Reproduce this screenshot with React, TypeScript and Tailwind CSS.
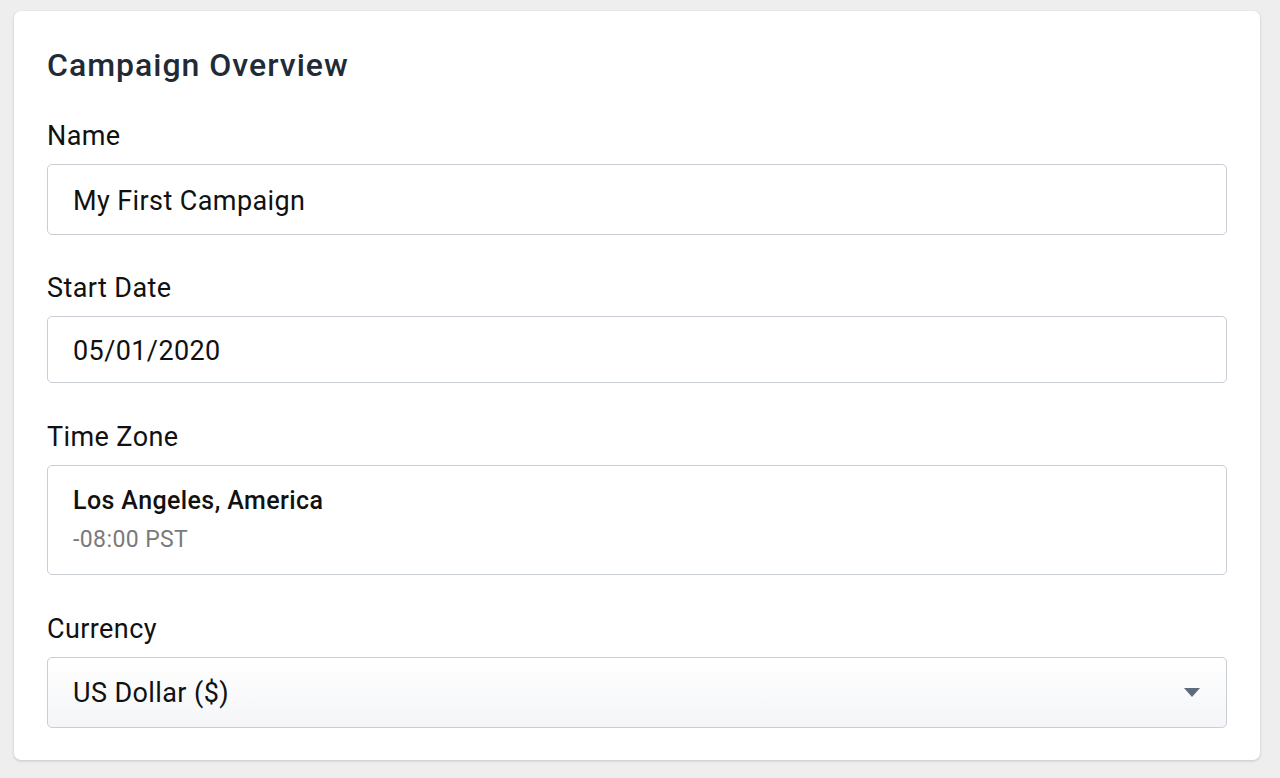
import { ReactNode } from "react";

// Campaign overview form card

const Label = ({ children }: { children: ReactNode }) => (
  <div className="text-[27px] leading-[28px] tracking-[0.4px] text-[#111111] mb-[14px]">{children}</div>
);

export default function App() {
  return (
    <div
      className="min-h-[778px] bg-[#eeeeee] pt-[11px] pl-[14px]"
      style={{ fontFamily: "Roboto, 'Liberation Sans', sans-serif" }}
    >
      <div className="w-[1246px] bg-white rounded-[7px] shadow-[0_1px_3px_rgba(0,0,0,0.18)] px-[33px] pt-[37px] pb-[32px]">
        <h2 className="text-[32px] leading-[34px] tracking-[1px] font-medium text-[#1f2b36]">Campaign Overview</h2>

        <div className="mt-[40px]">
          <Label>Name</Label>
          <div className="h-[71px] flex items-center border border-[#c9cdd4] rounded-[5px] px-[25px] pt-[4px] text-[27px] tracking-[0.4px] text-[#111111]">
            My First Campaign
          </div>
        </div>

        <div className="mt-[39px]">
          <Label>Start Date</Label>
          <div className="h-[67px] flex items-center border border-[#c9cdd4] rounded-[5px] px-[25px] pt-[3px] text-[27px] tracking-[0.4px] text-[#111111]">
            05/01/2020
          </div>
        </div>

        <div className="mt-[40px]">
          <Label>Time Zone</Label>
          <div className="h-[110px] flex flex-col justify-center border border-[#c9cdd4] rounded-[5px] px-[25px] tracking-[0.4px]">
            <div className="text-[25px] leading-[32px] font-medium text-[#111111]">Los Angeles, America</div>
            <div className="text-[23px] leading-[30px] mt-[8px] text-[#7a7a7a]">-08:00 PST</div>
          </div>
        </div>

        <div className="mt-[40px]">
          <Label>Currency</Label>
          <div className="h-[71px] flex items-center justify-between border border-[#c9cdd4] rounded-[5px] pl-[25px] pr-[26px] pt-[1px] text-[27px] tracking-[0.4px] text-[#111111] bg-gradient-to-b from-white to-[#f4f5f7]">
            <span>US Dollar ($)</span>
            <svg width="16" height="10" viewBox="0 0 16 10">
              <path d="M0 0H16L8 9Z" fill="#5e6b7a" />
            </svg>
          </div>
        </div>
      </div>
    </div>
  );
}
